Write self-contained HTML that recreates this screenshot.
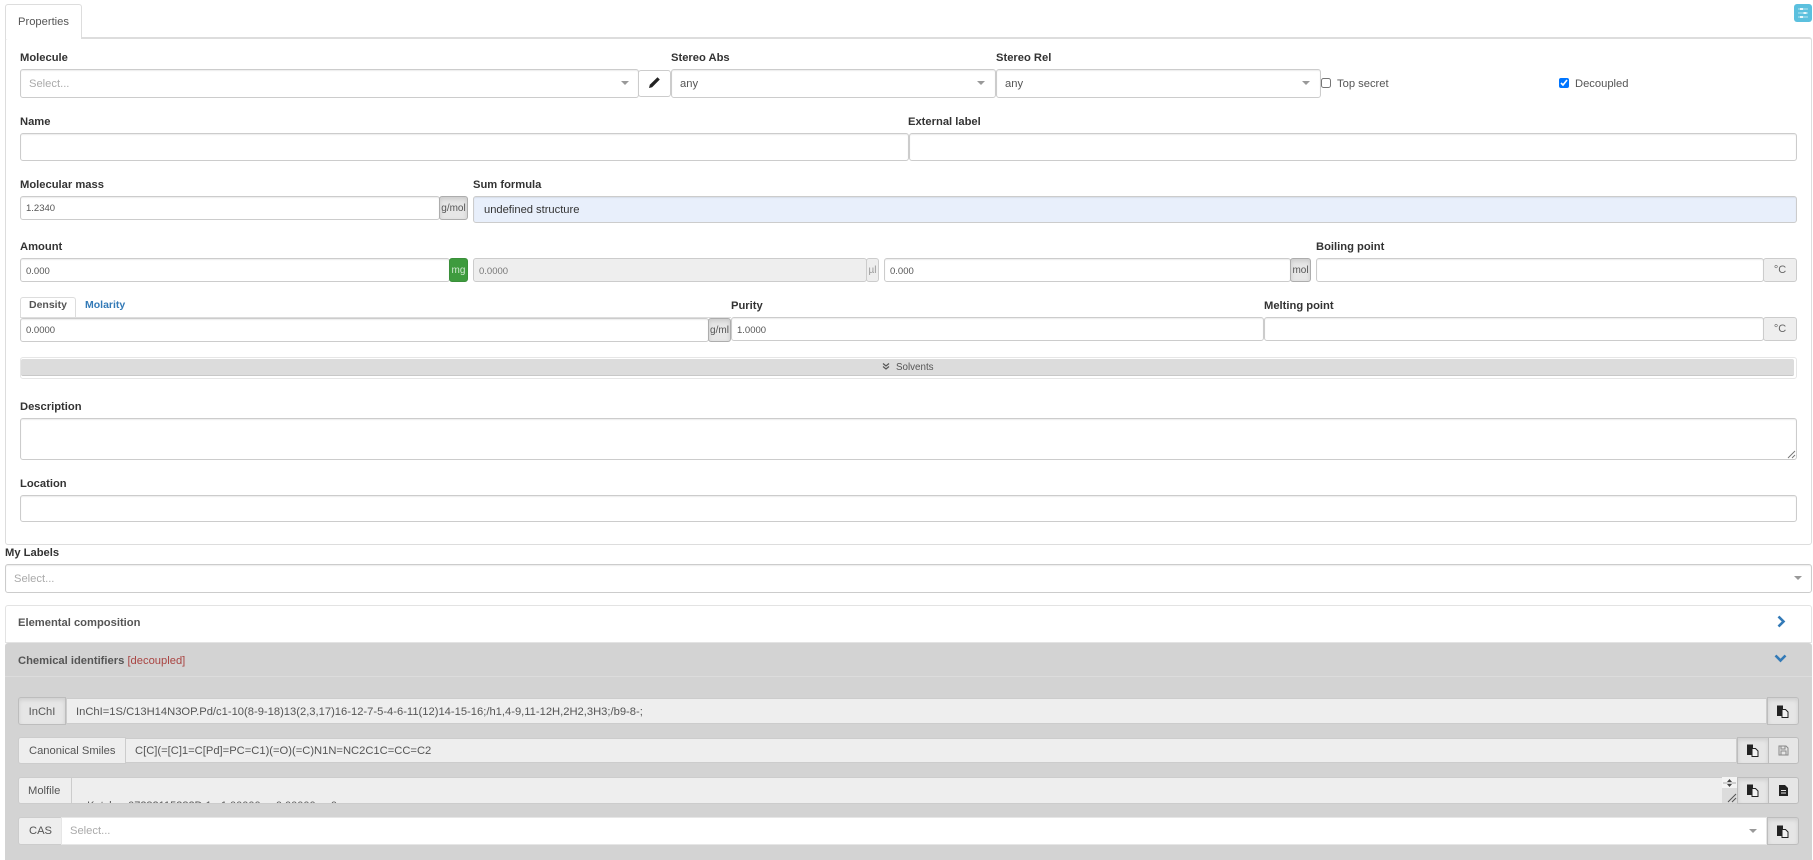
<!DOCTYPE html>
<html><head><meta charset="utf-8"><title>Properties</title>
<style>
html,body{margin:0;padding:0;width:1813px;height:860px;overflow:hidden;background:#fff;font-family:"Liberation Sans",Arial,sans-serif;font-size:11.2px;color:#555}
div,span.a,label{position:absolute;box-sizing:border-box}
.b{border:1px solid #ccc;border-radius:3px;background:#fff;box-shadow:inset 0 1px 1px rgba(0,0,0,.075);display:flex;align-items:center;white-space:nowrap}
.l{font-weight:bold;color:#333;font-size:11.2px;white-space:nowrap;line-height:16px;height:16px;margin-top:1px}
.ph{color:#aaa;font-size:11.2px;padding-left:8px}
.v{font-size:9.5px;padding-left:5px;color:#555}
.u{background:#eee;justify-content:center;font-size:10px;box-shadow:none;color:#666}
.ua{background:#e6e6e6;border-color:#adadad;justify-content:center;font-size:10px;box-shadow:inset 0 2px 4px rgba(0,0,0,.125);color:#555}
.arr{width:0;height:0;border-left:4.5px solid transparent;border-right:4.5px solid transparent;border-top:4.5px solid #999}
.ad{background:#eee;border-color:#ccc;font-size:11.2px;padding-left:10px;box-shadow:none;color:#555}
.in{background:#eee;font-size:11.2px;padding-left:9px;color:#555;box-shadow:none}
.bt{background:#e6e6e6;border-color:#bdbdbd;justify-content:center;box-shadow:inset 0 2px 4px rgba(0,0,0,.1)}
svg{display:block}
</style></head><body>

<!-- tab -->
<div style="left:5px;top:4px;width:77px;height:35px;border:1px solid #ddd;border-bottom:0;border-radius:3px 3px 0 0;background:#fff;z-index:2;padding:7px 0 0 12px;font-size:11.2px;line-height:20px;color:#555">Properties</div>
<div style="left:1794px;top:4px;width:18px;height:18px;background:#5bc0de;border-radius:3px"><svg width="18" height="18"><path d="M4 5h10M4 9h10M4 13h10" stroke="#9ad9ea" stroke-width="1.600"/><path d="M6 4h3v2H6zM9.500 8h3v2h-3zM6 12h3v2H6z" fill="#e8f7fb"/></svg></div>

<!-- main panel -->
<div style="left:5px;top:37px;width:1807px;height:508px;border:1px solid #ddd;border-top:2px solid #ddd;border-radius:3px"></div>

<div class="l" style="left:20px;top:49px">Molecule</div>
<div class="b ph" style="left:20px;top:69px;width:619px;height:29px">Select...</div>
<div class="arr" style="left:621px;top:81px"></div>
<div class="b" style="left:638px;top:70px;width:33px;height:27px;justify-content:center;box-shadow:none;padding-bottom:2px"><svg width="13" height="13" viewBox="0 0 13 13"><path d="M1 12l.8-3.200L9.500 1.200l2.300 2.300-7.700 7.700z" fill="#222"/></svg></div>
<div class="l" style="left:671px;top:49px">Stereo Abs</div>
<div class="b ph" style="left:671px;top:69px;width:325px;height:29px;color:#555">any</div>
<div class="arr" style="left:977px;top:81px"></div>
<div class="l" style="left:996px;top:49px">Stereo Rel</div>
<div class="b ph" style="left:996px;top:69px;width:325px;height:29px;color:#555">any</div>
<div class="arr" style="left:1302px;top:81px"></div>
<input type="checkbox" style="position:absolute;left:1321px;top:78px;width:10px;height:10px;margin:0">
<div style="left:1337px;top:76px;font-size:11.2px;line-height:16px;white-space:nowrap">Top secret</div>
<input type="checkbox" checked style="position:absolute;left:1559px;top:78px;width:10px;height:10px;margin:0">
<div style="left:1575px;top:76px;font-size:11.2px;line-height:16px;white-space:nowrap">Decoupled</div>

<div class="l" style="left:20px;top:113px">Name</div>
<div class="b" style="left:20px;top:133px;width:889px;height:28px"></div>
<div class="l" style="left:908px;top:113px">External label</div>
<div class="b" style="left:909px;top:133px;width:888px;height:28px"></div>

<div class="l" style="left:20px;top:176px">Molecular mass</div>
<div class="b v" style="left:20px;top:196px;width:420px;height:24px">1.2340</div>
<div class="b ua" style="left:439px;top:196px;width:29px;height:24px">g/mol</div>
<div class="l" style="left:473px;top:176px">Sum formula</div>
<div class="b" style="left:473px;top:196px;width:1324px;height:27px;background:#e8effb;padding-left:10px;font-size:11.2px;color:#333;letter-spacing:-.02px">undefined structure</div>

<div class="l" style="left:20px;top:238px">Amount</div>
<div class="b v" style="left:20px;top:258px;width:430px;height:24px;padding-top:2px">0.000</div>
<div class="b" style="left:449px;top:258px;width:19px;height:24px;background:#3e9b3e;border-color:#3a8f3a;color:#cfe8cf;justify-content:center;font-size:10px;box-shadow:none">mg</div>
<div class="b v" style="left:473px;top:258px;width:394px;height:24px;background:#eee;color:#777;box-shadow:none;padding-top:2px">0.0000</div>
<div class="b u" style="left:866px;top:258px;width:13px;height:24px;color:#999">µl</div>
<div class="b v" style="left:884px;top:258px;width:407px;height:24px;padding-top:2px">0.000</div>
<div class="b ua" style="left:1290px;top:258px;width:21px;height:24px">mol</div>
<div class="l" style="left:1316px;top:238px">Boiling point</div>
<div class="b" style="left:1316px;top:258px;width:448px;height:24px"></div>
<div class="b u" style="left:1763px;top:258px;width:34px;height:24px;font-size:11px">°C</div>

<div class="l" style="left:29px;top:296px;z-index:2;color:#555;font-size:10.500px">Density</div>
<div style="left:20px;top:297px;width:56px;height:21px;border:1px solid #ddd;border-bottom:0;border-radius:3px 3px 0 0"></div>
<div class="l" style="left:85px;top:296px;color:#337ab7;font-size:10.500px">Molarity</div>
<div style="left:20px;top:317px;width:711px;height:1px;background:#ddd"></div>
<div class="b v" style="left:20px;top:318px;width:689px;height:24px">0.0000</div>
<div class="b ua" style="left:708px;top:318px;width:23px;height:24px">g/ml</div>
<div class="l" style="left:731px;top:297px">Purity</div>
<div class="b v" style="left:731px;top:317px;width:533px;height:24px;padding-top:2px">1.0000</div>
<div class="l" style="left:1264px;top:297px">Melting point</div>
<div class="b" style="left:1264px;top:317px;width:500px;height:24px"></div>
<div class="b u" style="left:1763px;top:317px;width:34px;height:24px;font-size:11px">°C</div>

<div style="left:20px;top:357px;width:1777px;height:22px;border:1px solid #e6e6e6;border-radius:3px;background:#fff"></div>
<div style="left:21px;top:359px;width:1773px;height:17px;background:#dcdcdc;border-bottom:1px solid #c8c8c8;border-radius:2px"></div>
<div style="left:882px;top:362px;z-index:2"><svg width="8" height="9" viewBox="0 0 8 9"><path d="M1 1.500l3 2.500 3-2.500M1 4.500l3 2.500 3-2.500" fill="none" stroke="#555" stroke-width="1.200"/></svg></div>
<div style="left:896px;top:361px;font-size:9.800px;line-height:14px;color:#555;z-index:2">Solvents</div>

<div class="l" style="left:20px;top:398px">Description</div>
<div class="b" style="left:20px;top:418px;width:1777px;height:42px"></div>
<div style="left:1787px;top:450px"><svg width="9" height="9"><path d="M1 8l7-7M5 8l3-3" stroke="#777" stroke-width="1"/></svg></div>
<div class="l" style="left:20px;top:475px">Location</div>
<div class="b" style="left:20px;top:495px;width:1777px;height:27px"></div>

<!-- labels -->
<div class="l" style="left:5px;top:544px">My Labels</div>
<div class="b ph" style="left:5px;top:564px;width:1807px;height:29px">Select...</div>
<div class="arr" style="left:1794px;top:576px"></div>

<!-- elemental -->
<div style="left:5px;top:605px;width:1807px;height:38px;border:1px solid #e3e3e3;border-radius:3px 3px 0 0;background:#fff"></div>
<div class="l" style="left:18px;top:614px;color:#555">Elemental composition</div>
<div style="left:1776px;top:615px"><svg width="11" height="13" viewBox="0 0 11 13"><path d="M2.500 1.500l5 5-5 5" fill="none" stroke="#337ab7" stroke-width="2.600"/></svg></div>

<!-- chemical -->
<div style="left:5px;top:643px;width:1807px;height:217px;background:#d3d3d3;border-radius:3px 3px 0 0"></div>
<div style="left:5px;top:676px;width:1807px;height:1px;background:#dcdcdc"></div>
<div class="l" style="left:18px;top:652px;color:#555">Chemical identifiers <span style="font-weight:normal;color:#a94442">[decoupled]</span></div>
<div style="left:1774px;top:653px"><svg width="13" height="11" viewBox="0 0 13 11"><path d="M1.500 2.500l5 5 5-5" fill="none" stroke="#337ab7" stroke-width="2.600"/></svg></div>

<!-- InChI -->
<div class="b bt" style="left:18px;top:697px;width:48px;height:28px;font-size:11.200px;color:#555;z-index:2;border-radius:3px 0 0 3px;padding-top:2px">InChI</div>
<div class="b in" style="left:66px;top:698px;width:1701px;height:26px;border-radius:0;padding-top:2px">InChI=1S/C13H14N3OP.Pd/c1-10(8-9-18)13(2,3,17)16-12-7-5-4-6-11(12)14-15-16;/h1,4-9,11-12H,2H2,3H3;/b9-8-;</div>
<div class="b bt" style="left:1767px;top:697px;width:32px;height:28px;border-radius:0 3px 3px 0;padding-right:2px"><svg width="13" height="13" viewBox="0 0 13 13"><path d="M1 .5h6v3.500h1v7H1z" fill="#222"/><path d="M6 4.500h3.500l2.500 2.500v5.500H6z" fill="#f2f2f2" stroke="#222"/></svg></div>

<!-- Smiles -->
<div class="b ad" style="left:18px;top:737px;width:108px;height:27px;border-radius:3px 0 0 3px">Canonical Smiles</div>
<div class="b in" style="left:125px;top:738px;width:1612px;height:25px;border-radius:0">C[C](=[C]1=C[Pd]=PC=C1)(=O)(=C)N1N=NC2C1C=CC=C2</div>
<div class="b bt" style="left:1737px;top:737px;width:32px;height:27px;border-radius:0;padding-right:2px"><svg width="13" height="13" viewBox="0 0 13 13"><path d="M1 .5h6v3.500h1v7H1z" fill="#222"/><path d="M6 4.500h3.500l2.500 2.500v5.500H6z" fill="#f2f2f2" stroke="#222"/></svg></div>
<div class="b" style="left:1768px;top:737px;width:31px;height:27px;background:#e6e6e6;border-color:#bdbdbd;justify-content:center;box-shadow:none;border-radius:0 3px 3px 0"><svg width="11" height="11" viewBox="0 0 11 11"><path d="M1 1h7l2 2v7H1z" fill="none" stroke="#888"/><path d="M3 1v3h4V1M3 10V6h5v4" fill="none" stroke="#888"/></svg></div>

<!-- Molfile -->
<div class="b ad" style="left:18px;top:777px;width:54px;height:27px;border-radius:3px 0 0 3px;padding-left:9px">Molfile</div>
<div class="b in" style="left:71px;top:777px;width:1666px;height:27px;border-radius:0;overflow:hidden;display:block;padding:0"><span class="a" style="left:9px;top:21px;white-space:pre;font-size:11px;line-height:14px">  Ketcher 07282115382D 1   1.00000     0.00000     0</span></div>
<div style="left:1722px;top:777px;width:15px;height:11px;background:#f4f4f4"><svg width="15" height="11"><path d="M1 6h13" stroke="#aaa"/><path d="M7.500 2l2.500 3H5zM7.500 10L5 7h5z" fill="#444"/></svg></div>
<div style="left:1722px;top:788px;width:15px;height:15px;background:#dcdcdc"><svg width="15" height="15"><path d="M6 14l8-8M10 14l4-4" stroke="#555"/></svg></div>
<div class="b bt" style="left:1737px;top:777px;width:32px;height:27px;border-radius:0;padding-right:2px"><svg width="13" height="13" viewBox="0 0 13 13"><path d="M1 .5h6v3.500h1v7H1z" fill="#222"/><path d="M6 4.500h3.500l2.500 2.500v5.500H6z" fill="#f2f2f2" stroke="#222"/></svg></div>
<div class="b" style="left:1768px;top:777px;width:31px;height:27px;background:#e6e6e6;border-color:#bdbdbd;justify-content:center;box-shadow:none;border-radius:0 3px 3px 0"><svg width="11" height="13" viewBox="0 0 11 13"><path d="M1 1h6l3 3v8H1z" fill="#222"/><path d="M3 6.500h5M3 9h5" stroke="#e6e6e6"/></svg></div>

<!-- CAS -->
<div class="b ad" style="left:18px;top:817px;width:44px;height:28px;border-radius:3px 0 0 3px">CAS</div>
<div class="b ph" style="left:61px;top:817px;width:1706px;height:28px;border-radius:0;border-color:#e6e6e6;box-shadow:none">Select...</div>
<div class="arr" style="left:1749px;top:829px"></div>
<div class="b bt" style="left:1767px;top:817px;width:32px;height:28px;border-radius:0 3px 3px 0;padding-right:2px"><svg width="13" height="13" viewBox="0 0 13 13"><path d="M1 .5h6v3.500h1v7H1z" fill="#222"/><path d="M6 4.500h3.500l2.500 2.500v5.500H6z" fill="#f2f2f2" stroke="#222"/></svg></div>

</body></html>
